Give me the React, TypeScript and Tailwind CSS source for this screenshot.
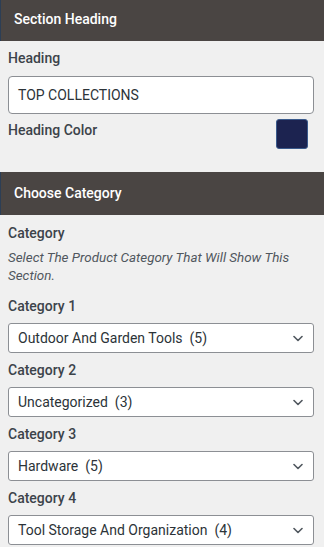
import React from 'react';

const font = { fontFamily: 'Roboto, "Liberation Sans", sans-serif' };

function PanelHeader({ title, first }: { title: string; first?: boolean }) {
  return (
    <div
      className={`h-[43px] pt-[11px] pl-[13px] pr-[14px] bg-[#4a4543] border-l border-[#2c3e55] text-white text-[14px] leading-5 font-medium ${first ? '-mt-[2px]' : ''}`}
    >
      {title}
    </div>
  );
}

function Label({ children }: { children: React.ReactNode }) {
  return <div className="text-[14px] leading-5 font-medium text-[#3c434a]">{children}</div>;
}

function Chevron() {
  return (
    <svg width="10" height="7" viewBox="0 0 10 7" fill="none">
      <path d="M1 1.5 L5 5.5 L9 1.5" stroke="#50575e" strokeWidth="1.6" strokeLinecap="round" strokeLinejoin="round" />
    </svg>
  );
}

function SelectBox({ value }: { value: string }) {
  return (
    <div className="mt-[7px] h-[30px] bg-white border border-[#8c8f94] rounded-[3px] flex items-center justify-between pl-[9px] pr-[10px]">
      <span className="text-[14px] text-[#2c3338] whitespace-pre">{value}</span>
      <Chevron />
    </div>
  );
}

const categories = [
  { label: 'Category 1', value: 'Outdoor And Garden Tools  (5)' },
  { label: 'Category 2', value: 'Uncategorized  (3)' },
  { label: 'Category 3', value: 'Hardware  (5)' },
  { label: 'Category 4', value: 'Tool Storage And Organization  (4)' },
];

export default function App() {
  return (
    <div className="w-[324px] h-[547px] overflow-hidden bg-[#f0f0f0]" style={font}>
      <PanelHeader title="Section Heading" first />
      <div className="pl-2 pr-[10px] pt-[7px] pb-[23px]">
        <Label>Heading</Label>
        <div className="mt-2 h-[38px] bg-white border border-[#8c8f94] rounded-[4px] flex items-center px-[9px] text-[14px] text-[#2c3338]">
          TOP COLLECTIONS
        </div>
        <div className="mt-[6px] flex justify-between items-start">
          <Label>Heading Color</Label>
          <div className="mr-[6px] -mt-[1px] w-8 h-[30px] rounded-[3px] bg-[#1c2350] border border-[#3a5a8c]" />
        </div>
      </div>
      <PanelHeader title="Choose Category" />
      <div className="pl-2 pr-[10px] pt-2">
        <Label>Category</Label>
        <p className="mt-[6px] text-[13.4px] leading-[18px] italic text-[#50575e]">
          Select The Product Category That Will Show This Section.
        </p>
        {categories.map((c, i) => (
          <div key={c.label} className={i === 0 ? 'mt-[11px]' : 'mt-[7px]'}>
            <Label>{c.label}</Label>
            <SelectBox value={c.value} />
          </div>
        ))}
      </div>
    </div>
  );
}
